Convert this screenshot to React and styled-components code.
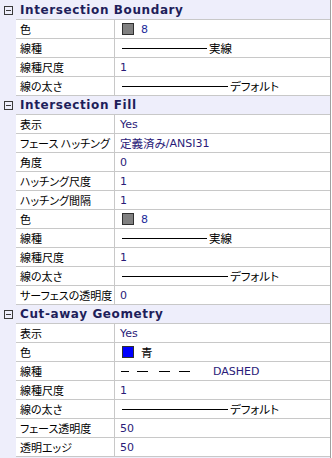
import React from "react";
import styled, { createGlobalStyle } from "styled-components";

const Global = createGlobalStyle`
  body {
    margin: 0;
    background: #ffffff;
  }
`;

const Panel = styled.div`
  width: 330px;
  padding-top: 1px;
  padding-bottom: 1px;
  background: #eeeefb;
  border-right: 1px solid #a0a0a0;
  font-family: "DejaVu Sans", "Noto Sans CJK JP", sans-serif;
  font-size: 11px;
`;

const Header = styled.div`
  display: flex;
  height: 19px;
`;

const Gutter = styled.div`
  width: 16px;
  flex: none;
  display: flex;
  align-items: center;
  padding-left: 4px;
  box-sizing: border-box;
`;

const Toggle = styled.div`
  width: 9px;
  height: 9px;
  box-sizing: border-box;
  border: 1px solid #3a3a3a;
  display: flex;
  align-items: center;
  justify-content: center;
  &::after {
    content: "";
    width: 5px;
    height: 1px;
    background: #3a3a3a;
  }
`;

const Title = styled.div`
  flex: 1;
  display: flex;
  align-items: center;
  padding-left: 4px;
  border-bottom: 1px solid #c8c8c8;
  font-weight: bold;
  font-size: 12px;
  letter-spacing: 0.6px;
  color: #1e1e5a;
`;

const Row = styled.div`
  display: flex;
  height: 19px;
  margin-left: 16px;
  box-sizing: border-box;
  background: #ffffff;
  border-bottom: 1px solid #c8c8c8;
`;

const Label = styled.div`
  width: 99px;
  flex: none;
  box-sizing: border-box;
  padding-left: 4px;
  border-right: 1px solid #c8c8c8;
  display: flex;
  align-items: center;
  font-family: "Noto Sans CJK JP", sans-serif;
  font-size: 11px;
  font-feature-settings: "palt";
  color: #000;
  white-space: nowrap;
  overflow: hidden;
`;

const Value = styled.div`
  flex: 1;
  display: flex;
  align-items: center;
  padding-left: 5px;
  color: ${(p) => p.color || "#2a1a78"};
  white-space: nowrap;
`;

const Jp = styled.span`
  font-family: "Noto Sans CJK JP", sans-serif;
  font-size: 11.5px;
  font-feature-settings: "palt";
  color: ${(p) => p.color || "#000"};
`;

const Swatch = styled.span`
  width: 12px;
  height: 12px;
  box-sizing: border-box;
  margin-left: 2px;
  margin-right: 7px;
  border: 1px solid #303030;
  background: ${(p) => p.fill};
`;

const Line = styled.span`
  width: ${(p) => p.width}px;
  height: 1px;
  margin-left: 2px;
  margin-right: 2px;
  background: #000;
`;

const Dashes = styled.svg`
  margin-left: 1px;
  margin-right: 22px;
  flex: none;
`;

const solid = (w, text) => (
  <>
    <Line width={w} />
    <Jp>{text}</Jp>
  </>
);

const color = (fill, text, jp) => (
  <>
    <Swatch fill={fill} />
    {jp ? <Jp>{text}</Jp> : <span style={{ color: "#1c2a9a" }}>{text}</span>}
  </>
);

const sections = [
  {
    title: "Intersection Boundary",
    rows: [
      ["色", color("#808080", "8")],
      ["線種", solid(85, "実線")],
      ["線種尺度", "1"],
      ["線の太さ", solid(106, "デフォルト")],
    ],
  },
  {
    title: "Intersection Fill",
    rows: [
      ["表示", "Yes"],
      [
        "フェース ハッチング",
        <>
          <Jp color="#2a1a78">定義済み</Jp>/ANSI31
        </>,
      ],
      ["角度", "0"],
      ["ハッチング尺度", "1"],
      ["ハッチング間隔", "1"],
      ["色", color("#808080", "8")],
      ["線種", solid(85, "実線")],
      ["線種尺度", "1"],
      ["線の太さ", solid(106, "デフォルト")],
      ["サーフェスの透明度", "0"],
    ],
  },
  {
    title: "Cut-away Geometry",
    rows: [
      ["表示", "Yes"],
      ["色", color("#0000ff", "青", true)],
      [
        "線種",
        <>
          <Dashes width="70" height="3" viewBox="0 0 70 3">
            <path d="M0 1.5H8M16 1.5H27M38 1.5H49M58 1.5H69" stroke="#000" strokeWidth="1" />
          </Dashes>
          DASHED
        </>,
      ],
      ["線種尺度", "1"],
      ["線の太さ", solid(106, "デフォルト")],
      ["フェース透明度", "50"],
      ["透明エッジ", "50"],
    ],
  },
];

export default function App() {
  return (
    <>
      <Global />
      <Panel>
        {sections.map((s) => (
          <React.Fragment key={s.title}>
            <Header>
              <Gutter>
                <Toggle />
              </Gutter>
              <Title>{s.title}</Title>
            </Header>
            {s.rows.map(([label, value], i) => (
              <Row key={i}>
                <Label>{label}</Label>
                <Value>{value}</Value>
              </Row>
            ))}
          </React.Fragment>
        ))}
      </Panel>
    </>
  );
}
